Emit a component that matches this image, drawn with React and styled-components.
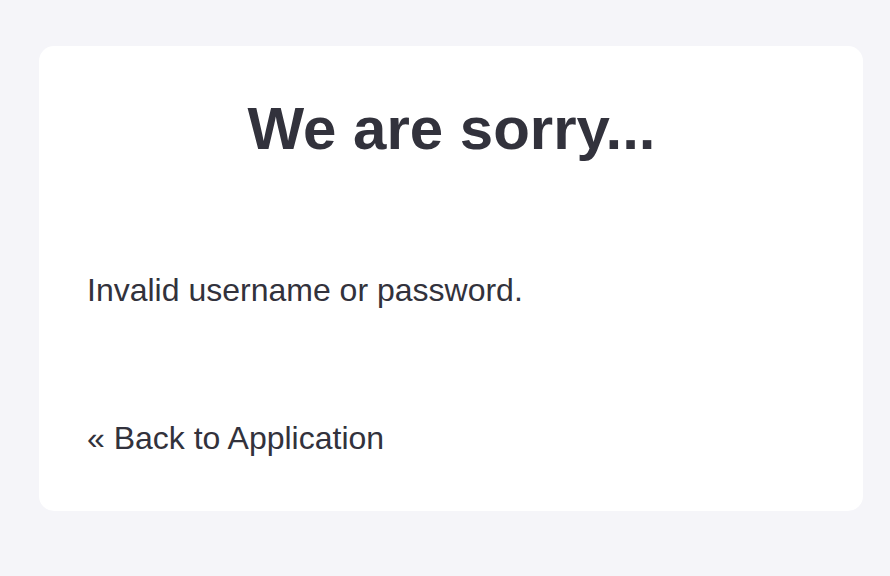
import styled, { createGlobalStyle } from "styled-components";

const GlobalStyle = createGlobalStyle`
  html, body {
    margin: 0;
    padding: 0;
    background-color: #f5f5f9;
  }
  body {
    font-family: "Liberation Sans", Arial, sans-serif;
    color: #32323c;
  }
`;

const Page = styled.main`
  min-height: 576px;
  box-sizing: border-box;
  padding: 46px 27px 0 39px;
`;

const Card = styled.section`
  background-color: #fff;
  border-radius: 15px;
  padding: 47px 47px 53px 48px;
  display: flex;
  flex-direction: column;
`;

const Title = styled.h1`
  margin: 0;
  font-size: 60px;
  line-height: 72px;
  font-weight: 700;
  text-align: center;
  color: #32323c;
`;

const Message = styled.p`
  margin: 105px 0 0;
  font-size: 32px;
  line-height: 40px;
`;

const BackLink = styled.a`
  display: block;
  margin-top: 108px;
  font-size: 32px;
  line-height: 40px;
  color: #32323c;
  text-decoration: none;
`;

const App = () => {
  return (
    <Page>
      <GlobalStyle />
      <Card>
        <Title>We are sorry...</Title>
        <Message>Invalid username or password.</Message>
        <BackLink href="#">« Back to Application</BackLink>
      </Card>
    </Page>
  );
};

export default App;
